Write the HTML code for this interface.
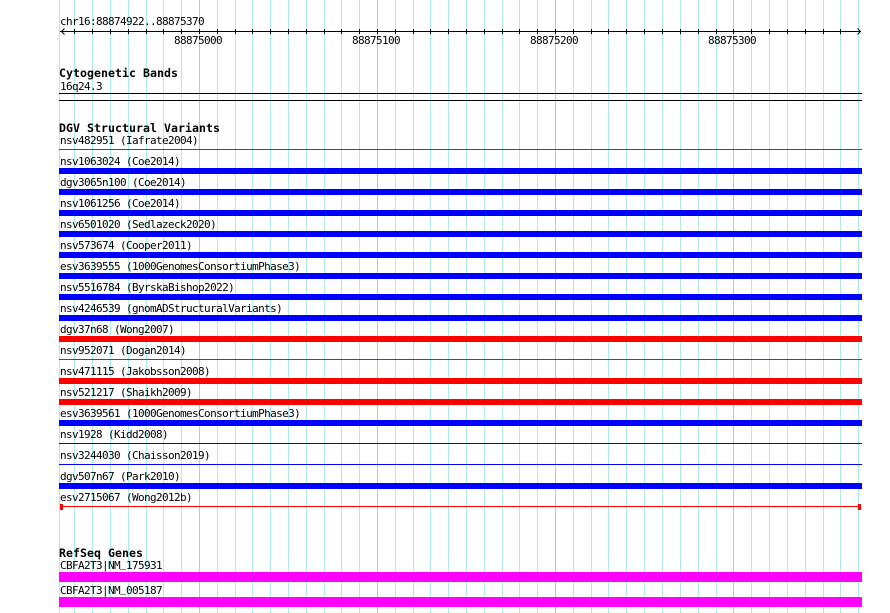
<!DOCTYPE html>
<html>
<head>
<meta charset="utf-8">
<style>
html,body{margin:0;padding:0;background:#fff;width:890px;height:613px;overflow:hidden}
svg{display:block;position:absolute;left:0;top:0}
text{font-family:"DejaVu Sans Mono",monospace;font-size:11px;letter-spacing:-0.62px;fill:#000}
text.b{font-family:"DejaVu Sans Mono",monospace;font-weight:bold;font-size:11.6px;letter-spacing:0.02px}
tspan.u{font-family:"Liberation Mono",monospace;font-size:10px;letter-spacing:0}
</style>
</head>
<body>
<svg width="890" height="613" viewBox="0 0 890 613" shape-rendering="crispEdges">
<g fill="#aeeaee">
<rect x="59" y="0" width="1" height="613"/><rect x="74" y="0" width="1" height="613"/><rect x="92" y="0" width="1" height="613"/><rect x="110" y="0" width="1" height="613"/><rect x="128" y="0" width="1" height="613"/><rect x="146" y="0" width="1" height="613"/><rect x="163" y="0" width="1" height="613"/><rect x="181" y="0" width="1" height="613"/>
<rect x="217" y="0" width="1" height="613"/><rect x="235" y="0" width="1" height="613"/><rect x="252" y="0" width="1" height="613"/><rect x="270" y="0" width="1" height="613"/><rect x="288" y="0" width="1" height="613"/><rect x="306" y="0" width="1" height="613"/><rect x="324" y="0" width="1" height="613"/><rect x="341" y="0" width="1" height="613"/><rect x="359" y="0" width="1" height="613"/>
<rect x="395" y="0" width="1" height="613"/><rect x="413" y="0" width="1" height="613"/><rect x="430" y="0" width="1" height="613"/><rect x="448" y="0" width="1" height="613"/><rect x="466" y="0" width="1" height="613"/><rect x="484" y="0" width="1" height="613"/><rect x="502" y="0" width="1" height="613"/><rect x="519" y="0" width="1" height="613"/><rect x="537" y="0" width="1" height="613"/>
<rect x="573" y="0" width="1" height="613"/><rect x="591" y="0" width="1" height="613"/><rect x="608" y="0" width="1" height="613"/><rect x="626" y="0" width="1" height="613"/><rect x="644" y="0" width="1" height="613"/><rect x="662" y="0" width="1" height="613"/><rect x="680" y="0" width="1" height="613"/><rect x="698" y="0" width="1" height="613"/><rect x="716" y="0" width="1" height="613"/>
<rect x="751" y="0" width="1" height="613"/><rect x="769" y="0" width="1" height="613"/><rect x="787" y="0" width="1" height="613"/><rect x="805" y="0" width="1" height="613"/><rect x="823" y="0" width="1" height="613"/><rect x="840" y="0" width="1" height="613"/><rect x="858" y="0" width="1" height="613"/>
</g>
<g fill="#a0d0f0">
<rect x="199" y="0" width="1" height="613"/><rect x="377" y="0" width="1" height="613"/><rect x="555" y="0" width="1" height="613"/><rect x="733" y="0" width="1" height="613"/>
</g>

<!-- axis -->
<rect x="60" y="31" width="801" height="1" fill="#000"/>
<g fill="#000">
<rect x="74" y="29" width="1" height="5"/><rect x="92" y="29" width="1" height="5"/><rect x="110" y="29" width="1" height="5"/><rect x="128" y="29" width="1" height="5"/><rect x="146" y="29" width="1" height="5"/><rect x="163" y="29" width="1" height="5"/><rect x="181" y="29" width="1" height="5"/><rect x="199" y="29" width="1" height="5"/>
<rect x="217" y="29" width="1" height="5"/><rect x="235" y="29" width="1" height="5"/><rect x="252" y="29" width="1" height="5"/><rect x="270" y="29" width="1" height="5"/><rect x="288" y="29" width="1" height="5"/><rect x="306" y="29" width="1" height="5"/><rect x="324" y="29" width="1" height="5"/><rect x="341" y="29" width="1" height="5"/><rect x="359" y="29" width="1" height="5"/><rect x="377" y="29" width="1" height="5"/>
<rect x="395" y="29" width="1" height="5"/><rect x="413" y="29" width="1" height="5"/><rect x="430" y="29" width="1" height="5"/><rect x="448" y="29" width="1" height="5"/><rect x="466" y="29" width="1" height="5"/><rect x="484" y="29" width="1" height="5"/><rect x="502" y="29" width="1" height="5"/><rect x="519" y="29" width="1" height="5"/><rect x="537" y="29" width="1" height="5"/><rect x="555" y="29" width="1" height="5"/>
<rect x="573" y="29" width="1" height="5"/><rect x="591" y="29" width="1" height="5"/><rect x="608" y="29" width="1" height="5"/><rect x="626" y="29" width="1" height="5"/><rect x="644" y="29" width="1" height="5"/><rect x="662" y="29" width="1" height="5"/><rect x="680" y="29" width="1" height="5"/><rect x="698" y="29" width="1" height="5"/><rect x="716" y="29" width="1" height="5"/><rect x="733" y="29" width="1" height="5"/>
<rect x="751" y="29" width="1" height="5"/><rect x="769" y="29" width="1" height="5"/><rect x="787" y="29" width="1" height="5"/><rect x="805" y="29" width="1" height="5"/><rect x="823" y="29" width="1" height="5"/><rect x="840" y="29" width="1" height="5"/>
</g>
<path d="M64.5 28.5L61.5 31.5L64.5 34.5M857.5 28.5L860.5 31.5L857.5 34.5" fill="none" stroke="#000" stroke-width="1" shape-rendering="auto"/>

<!-- band lines -->
<rect x="59" y="93" width="803" height="1" fill="#000"/>
<rect x="59" y="100" width="803" height="1" fill="#000"/>

<!-- feature glyphs -->
<g fill="#f00">
<rect x="59" y="149" width="803" height="1"/>
<rect x="59" y="336" width="803" height="6"/>
<rect x="59" y="359" width="803" height="1"/>
<rect x="59" y="378" width="803" height="6"/>
<rect x="59" y="399" width="803" height="6"/>
<rect x="60" y="506" width="800" height="1"/>
<rect x="60" y="504" width="3" height="6"/>
<rect x="858" y="504" width="3" height="6"/>
</g>
<g fill="#00f">
<rect x="59" y="168" width="803" height="6"/>
<rect x="59" y="189" width="803" height="6"/>
<rect x="59" y="210" width="803" height="6"/>
<rect x="59" y="231" width="803" height="6"/>
<rect x="59" y="252" width="803" height="6"/>
<rect x="59" y="273" width="803" height="6"/>
<rect x="59" y="294" width="803" height="6"/>
<rect x="59" y="315" width="803" height="6"/>
<rect x="59" y="420" width="803" height="6"/>
<rect x="59" y="443" width="803" height="1"/>
<rect x="59" y="464" width="803" height="1"/>
<rect x="59" y="483" width="803" height="6"/>
</g>
<g fill="#f0f">
<rect x="59" y="572" width="803" height="10"/>
<rect x="59" y="597" width="803" height="10"/>
</g>

<!-- text -->
<text x="60" y="25">chr16:88874922..88875370</text>
<text x="174" y="44">88875000</text>
<text x="352" y="44">88875100</text>
<text x="530" y="44">88875200</text>
<text x="708" y="44">88875300</text>
<text class="b" x="59" y="77">Cytogenetic Bands</text>
<text x="60" y="90">16q24.3</text>
<text class="b" x="59" y="132">DGV Structural Variants</text>
<text x="60" y="144">nsv482951 (Iafrate2004)</text>
<text x="60" y="165">nsv1063024 (Coe2014)</text>
<text x="60" y="186">dgv3065n100 (Coe2014)</text>
<text x="60" y="207">nsv1061256 (Coe2014)</text>
<text x="60" y="228">nsv6501020 (Sedlazeck2020)</text>
<text x="60" y="249">nsv573674 (Cooper2011)</text>
<text x="60" y="270">esv3639555 (1000GenomesConsortiumPhase3)</text>
<text x="60" y="291">nsv5516784 (ByrskaBishop2022)</text>
<text x="60" y="312">nsv4246539 (gnomADStructuralVariants)</text>
<text x="60" y="333">dgv37n68 (Wong2007)</text>
<text x="60" y="354">nsv952071 (Dogan2014)</text>
<text x="60" y="375">nsv471115 (Jakobsson2008)</text>
<text x="60" y="396">nsv521217 (Shaikh2009)</text>
<text x="60" y="417">esv3639561 (1000GenomesConsortiumPhase3)</text>
<text x="60" y="438">nsv1928 (Kidd2008)</text>
<text x="60" y="459">nsv3244030 (Chaisson2019)</text>
<text x="60" y="480">dgv507n67 (Park2010)</text>
<text x="60" y="501">esv2715067 (Wong2012b)</text>
<text class="b" x="59" y="557">RefSeq Genes</text>
<text x="60" y="569">CBFA2T3|NM<tspan class="u">_</tspan>175931</text>
<text x="60" y="594">CBFA2T3|NM<tspan class="u">_</tspan>005187</text>
</svg>
</body>
</html>
